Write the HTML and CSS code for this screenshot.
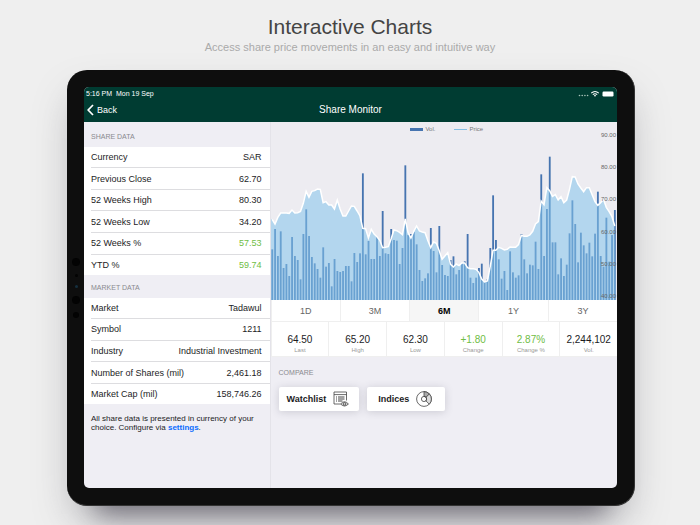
FILE: index.html
```html
<!DOCTYPE html>
<html lang="en">
<head>
<meta charset="UTF-8">
<title>Interactive Charts</title>
<meta name="viewport" content="width=device-width, initial-scale=1.0">
<link rel="stylesheet" href="styles.css">
</head>
<body>
<header class="intro">
    <h1>Interactive Charts</h1>
    <p>Access share price movements in an easy and intuitive way</p>
</header>
<div class="tablet">
    <div class="sensors">
        <i class="lens"></i>
        <i class="dot"></i>
        <i class="dot blue"></i>
        <i class="lens"></i>
        <i class="lens small"></i>
    </div>
    <div class="screen">
        <div class="topbar">
            <div class="status">
                <span>5:16 PM&nbsp; Mon 19 Sep</span>
                <svg class="status-icons" width="36" height="8" viewBox="0 0 36 8">
                    <g fill="#a9c4bb">
                        <circle cx="1.5" cy="5.5" r=".8"/>
                        <circle cx="4.2" cy="5.5" r=".8"/>
                        <circle cx="6.9" cy="5.5" r=".8"/>
                        <circle cx="9.6" cy="5.5" r=".8"/>
                    </g>
                    <g fill="none" stroke="#fff" stroke-width="1.1">
                        <path d="M13.2 3.2Q17 -.2 20.8 3.2"/>
                        <path d="M14.8 4.6Q17 2.8 19.2 4.6"/>
                    </g>
                    <path d="M15.8 5.4Q17 4.6 18.2 5.4L17 6.8z" fill="#fff"/>
                    <rect x="24.5" y="1.5" width="11" height="5" rx="1.2" fill="#fff"/>
                </svg>
            </div>
            <nav class="nav">
                <a class="back" href="#">
                    <svg width="7" height="12" viewBox="0 0 7 12"><path d="M6 1L1.2 6L6 11" fill="none" stroke="#fff" stroke-width="1.7"/></svg>
                    Back
                </a>
                <h2>Share Monitor</h2>
            </nav>
        </div>
        <div class="content">
            <aside class="side">
                <h3>SHARE DATA</h3>
                <div class="group">
                    <table class="rows share">
                        <tr><th scope="row">Currency</th><td>SAR</td></tr>
                        <tr><th scope="row">Previous Close</th><td>62.70</td></tr>
                        <tr><th scope="row">52 Weeks High</th><td>80.30</td></tr>
                        <tr><th scope="row">52 Weeks Low</th><td>34.20</td></tr>
                        <tr><th scope="row">52 Weeks %</th><td class="up">57.53</td></tr>
                        <tr><th scope="row">YTD %</th><td class="up">59.74</td></tr>
                    </table>
                </div>
                <h3>MARKET DATA</h3>
                <div class="group">
                    <table class="rows market">
                        <tr><th scope="row">Market</th><td>Tadawul</td></tr>
                        <tr><th scope="row">Symbol</th><td>1211</td></tr>
                        <tr><th scope="row">Industry</th><td>Industrial Investment</td></tr>
                        <tr><th scope="row">Number of Shares (mil)</th><td>2,461.18</td></tr>
                        <tr><th scope="row">Market Cap (mil)</th><td>158,746.26</td></tr>
                    </table>
                </div>
                <p class="note">All share data is presented in currency of your choice. Configure via <a href="#">settings</a>.</p>
            </aside>
            <main class="main">
                <div class="chart">
                    <svg id="plot" viewBox="0 6 1040 534" preserveAspectRatio="none"></svg>
                    <div class="legend">
                        <span class="vol">Vol.</span>
                        <span class="price">Price</span>
                    </div>
                    <div class="axis">
                        <span>90.00</span>
                        <span>80.00</span>
                        <span>70.00</span>
                        <span>60.00</span>
                        <span>50.00</span>
                        <span>40.00</span>
                    </div>
                </div>
                <div class="periods">
                    <button type="button">1D</button>
                    <button type="button">3M</button>
                    <button type="button" class="active">6M</button>
                    <button type="button">1Y</button>
                    <button type="button">3Y</button>
                </div>
                <div class="stats">
                    <div><strong>64.50</strong><span>Last</span></div>
                    <div><strong>65.20</strong><span>High</span></div>
                    <div><strong>62.30</strong><span>Low</span></div>
                    <div><strong class="up">+1.80</strong><span>Change</span></div>
                    <div><strong class="up">2.87%</strong><span>Change %</span></div>
                    <div><strong>2,244,102</strong><span>Vol.</span></div>
                </div>
                <section class="compare">
                    <h3>COMPARE</h3>
                    <div class="actions">
                        <button type="button">
                            Watchlist
                            <svg width="16" height="16" viewBox="0 0 16 16" fill="none" stroke="#444" stroke-width=".8">
                                <path d="M7.5 13H1V1h12.5v8.5"/>
                                <path d="M1 3.6h12.5"/>
                                <path d="M3 6h1M3 8h1M3 10h1M5 6h6.5M5 8h6.5M5 10h4.5" stroke-width="1"/>
                                <path d="M7.6 13Q11.5 8.5 15.4 13Q11.5 17 7.6 13z" fill="#ddd"/>
                                <circle cx="11.5" cy="12.9" r="1.3"/>
                            </svg>
                        </button>
                        <button type="button">
                            Indices
                            <svg width="16" height="16" viewBox="0 0 16 16" fill="none" stroke="#444" stroke-width=".8">
                                <circle cx="8" cy="8" r="7.4"/>
                                <path d="M8 .6V5.4A2.6 2.6 0 0 1 10 6.3L13.4 3A7.4 7.4 0 0 0 8 .6z" fill="#aaa"/>
                                <path d="M13.4 3A7.4 7.4 0 0 1 13.3 13.2L9.9 9.8A2.6 2.6 0 0 0 10 6.3z" fill="#ddd"/>
                                <circle cx="8" cy="8" r="2.6"/>
                            </svg>
                        </button>
                    </div>
                </section>
            </main>
        </div>
    </div>
</div>
<script src="chart.js"></script>
</body>
</html>
```

FILE: styles.css
```css
* {
    box-sizing: border-box;
    margin: 0;
    padding: 0;
}

body {
    display: flex;
    flex-direction: column;
    min-height: 100vh;
    overflow-x: hidden;
    background: #efefef;
    color: #1c1c1e;
    font-family: "Liberation Sans", Arial, sans-serif;
    font-size: 9px;
}

button {
    border: none;
    background: #fff;
    color: inherit;
    font-family: inherit;
    font-size: 9px;
}

.up {
    color: #6fbd45;
}

.intro {
    padding: 15px 0 14px;
    text-align: center;
}

.intro h1 {
    line-height: 24px;
    color: #444;
    font-size: 21px;
    font-weight: normal;
}

.intro p {
    line-height: 17px;
    color: #aaa;
    font-size: 11px;
}

.tablet {
    position: relative;
    display: flex;
    flex: 1;
    margin: 0 65px 19px 67px;
    padding: 17px;
    border: 1px solid #333;
    border-width: 0 1px 1px 0;
    border-radius: 20px;
    background: #0e0e0e;
    box-shadow: 0 38px 24px -30px rgba(70, 65, 80, 0.6), 0 20px 40px -8px rgba(80, 80, 90, 0.4);
}

.sensors {
    position: absolute;
    top: 0;
    bottom: 0;
    left: 4px;
    display: flex;
    flex-direction: column;
    align-items: center;
    justify-content: center;
    gap: 8px;
    width: 10px;
}

.sensors i {
    width: 8px;
    height: 8px;
    border-radius: 50%;
    background: #030303;
}

.sensors .dot {
    width: 3px;
    height: 3px;
}

.sensors .blue {
    background: #15303f;
}

.sensors .small {
    width: 6px;
    height: 6px;
}

.screen {
    display: flex;
    flex: 1;
    flex-direction: column;
    overflow: hidden;
    border-radius: 5px;
    background: #efeef4;
}

.topbar {
    height: 35px;
    background: #003c32;
    color: #fff;
}

.status {
    display: flex;
    justify-content: space-between;
    padding: 3px 3px 0 2px;
    line-height: 8px;
    font-size: 7px;
}

.nav {
    position: relative;
    line-height: 24px;
    text-align: center;
}

.nav h2 {
    font-size: 10px;
    font-weight: normal;
}

.back {
    position: absolute;
    left: 3px;
    display: flex;
    align-items: center;
    gap: 3px;
    color: #fff;
    text-decoration: none;
}

.content {
    display: flex;
    flex: 1;
}

.side {
    flex: 0 0 35%;
    min-width: 0;
    border-right: 1px solid #e4e3e9;
}

h3 {
    color: #8a8a8f;
    font-size: 7px;
    font-weight: normal;
}

.side h3 {
    padding: 7px 7px 0;
    height: 23px;
    line-height: 12px;
}

.side h3:first-child {
    padding-top: 9px;
    height: 25px;
}

.group {
    padding-left: 7px;
    background: #fff;
}

.rows {
    width: 100%;
    border-collapse: collapse;
    table-layout: fixed;
    white-space: nowrap;
}

.share {
    height: 128px;
}

.market {
    height: 106px;
}

.rows th,
.rows td {
    border-bottom: 1px solid #dddde0;
    font-weight: normal;
    text-align: left;
}

.rows th {
    width: 45%;
}

.rows td {
    padding-right: 8px;
    text-align: right;
}

.rows tr:last-child th,
.rows tr:last-child td {
    border-bottom: none;
}

.note {
    padding: 10px 7px;
    line-height: 9px;
    font-size: 8px;
}

.note a {
    color: #0a6cff;
    font-weight: bold;
    text-decoration: none;
}

.main {
    flex: 1;
    min-width: 0;
}

.chart {
    position: relative;
    height: 178px;
    background: #edecf1;
}

.chart svg {
    display: block;
    width: 100%;
    height: 100%;
}

.bar {
    fill: #4674b0;
}

.area {
    fill: #85c5ec;
    fill-opacity: 0.56;
}

.line {
    fill: none;
    stroke: #fff;
    stroke-width: 1.5;
    vector-effect: non-scaling-stroke;
}

.legend {
    position: absolute;
    top: 3px;
    left: 0;
    right: 0;
    display: flex;
    justify-content: center;
    gap: 19px;
    padding-left: 6px;
    line-height: 9px;
    color: #777;
    font-size: 6px;
}

.legend span {
    display: flex;
    align-items: center;
    gap: 2px;
}

.legend span:before {
    content: '';
    width: 13px;
    height: 3px;
    background: #4674b0;
}

.legend .price:before {
    height: 1px;
    background: #85bfe4;
}

.axis {
    position: absolute;
    top: 9px;
    right: 1px;
    bottom: 0;
    display: flex;
    flex-direction: column;
    justify-content: space-between;
    line-height: 8px;
    color: #666;
    font-size: 6px;
}

.periods,
.stats {
    display: flex;
    border-bottom: 1px solid #efefef;
    background: #fff;
}

.periods button {
    flex: 1;
    border-left: 1px solid #efefef;
    height: 21px;
    color: #666;
}

.periods .active {
    background: #f6f6f6;
    color: #000;
    font-weight: bold;
}

.stats div {
    flex: 1;
    padding: 12px 0 1px;
    border-left: 1px solid #efefef;
    text-align: center;
}

.stats strong {
    display: block;
    line-height: 12px;
    font-size: 10px;
    font-weight: normal;
}

.stats span {
    display: block;
    line-height: 9px;
    color: #999;
    font-size: 6px;
}

.compare {
    padding: 10px 8px;
}

.compare h3 {
    line-height: 12px;
}

.actions {
    display: flex;
    gap: 8px;
    margin-top: 8px;
}

.actions button {
    display: flex;
    align-items: center;
    gap: 7px;
    padding: 0 10px 0 8px;
    border-radius: 2px;
    height: 24px;
    box-shadow: 0 1px 8px rgba(60, 60, 80, 0.2);
    font-weight: bold;
}

.actions button:last-child {
    padding: 0 13px 0 11px;
}
```

FILE: chart.js
```javascript
// tops of the bars and of the price line, one per trading day
var volume = [
    388, 327, 408, 334, 444, 432, 468, 351, 408, 420, 478, 342, 268, 348, 411, 430,
    447, 473, 382, 440, 429, 499, 417, 453, 456, 453, 438, 438, 484, 399, 426, 400,
    160, 403, 363, 417, 417, 351, 408, 273, 400, 402, 327, 360, 362, 432, 384, 136,
    345, 342, 336, 373, 450, 483, 475, 460, 324, 393, 457, 318, 435, 465, 468, 420,
    409, 463, 450, 430, 424, 342, 473, 489, 473, 444, 431, 487, 478, 384, 226, 360,
    418, 476, 453, 510, 394, 457, 473, 466, 342, 418, 460, 434, 436, 365, 447, 163,
    408, 267, 110, 367, 367, 463, 415, 468, 434, 340, 241, 312, 427, 338, 376, 400,
    368, 409, 341, 215, 408, 440, 293, 425, 345, 270
];
var price = [
    298, 312, 292, 279, 279, 279, 280, 270, 279, 278, 274, 250, 214, 232, 214, 212,
    207, 208, 248, 245, 255, 255, 267, 240, 267, 288, 288, 273, 258, 259, 273, 288,
    325, 326, 354, 328, 342, 350, 361, 383, 382, 380, 357, 330, 332, 337, 344, 297,
    338, 354, 334, 318, 333, 336, 338, 362, 383, 366, 370, 392, 418, 408, 398, 433,
    441, 432, 437, 429, 429, 443, 446, 446, 448, 457, 477, 486, 483, 440, 391, 391,
    382, 385, 390, 388, 381, 382, 382, 374, 346, 349, 349, 345, 334, 312, 305, 243,
    254, 203, 212, 229, 224, 240, 230, 248, 240, 208, 170, 171, 192, 204, 215, 203,
    203, 224, 245, 256, 248, 238, 262, 275, 290, 318
];
var base = 540;
var step = 8.5;
var html = '';
var points = [];

for(var i = 0; i < volume.length; i++){
    var x = 3.5 + i * step;
    html += '<rect class="bar" x="' + (x - 2.5) + '" y="' + volume[i] + '" width="5.5" height="' + (base - volume[i]) + '"/>';
    points.push(x + ',' + price[i]);
}

var line = points.join(' ');
html += '<polygon class="area" points="0,' + base + ' 0,298 ' + line + ' 1035,' + base + '"/>';
html += '<polyline class="line" points="' + line + '"/>';

document.querySelector('#plot').innerHTML = html;
```
